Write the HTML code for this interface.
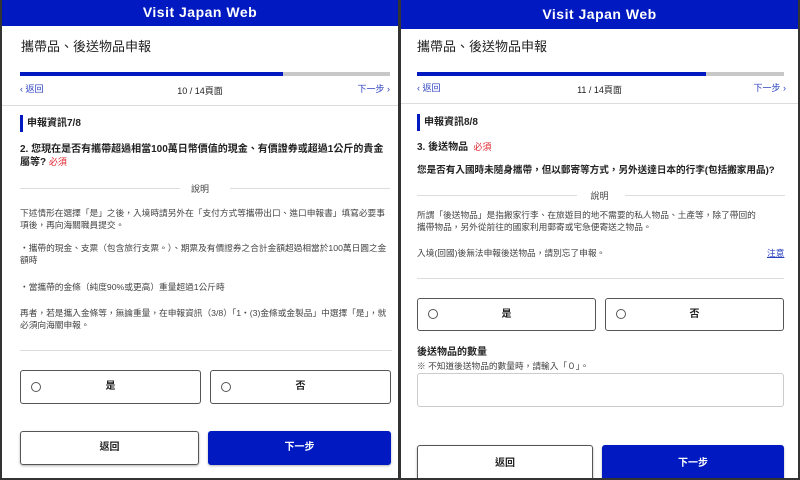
<!DOCTYPE html>
<html><head><meta charset="utf-8"><style>
*{margin:0;padding:0;box-sizing:border-box}
body{width:800px;height:480px;background:#333;font-family:"Liberation Sans","Noto Sans CJK TC",sans-serif;color:#222;position:relative;overflow:hidden}
.p{position:absolute;top:0;background:#fff;overflow:hidden}
.a{position:absolute}
.hd{position:absolute;left:0;right:0;top:0;background:#0019c0;color:#fff;font-weight:bold;text-align:center;font-size:14px;letter-spacing:.5px}
.t{font-size:13px;color:#222}
.bar{height:4px;background:#c8c8c8}
.bar i{display:block;height:4px;background:#0019c0}
.nav{font-size:9px;color:#2a3fbf}
.sep{height:1px;background:#ddd}
.mk{border-left:3px solid #0019c0;padding-left:4px;font-size:10px;font-weight:bold}
.q{font-size:10px;font-weight:bold;line-height:13px}
.r{color:#e0202a}
.s{font-size:8.7px;color:#444;line-height:12px}
.box{border:1px solid #555;border-radius:3px;font-size:10px;font-weight:bold;text-align:center}
.box b{position:absolute;left:10px;width:10px;height:10px;border:1px solid #555;border-radius:50%}
.btn{border:1px solid #555;border-radius:3px;font-size:10px;font-weight:bold;text-align:center;box-shadow:0 1px 2px rgba(0,0,0,.3)}
.blue{background:#0019c0;color:#fff;border-color:#0019c0}
</style></head><body>
<div class="p" style="left:2px;width:396px;height:478px">
 <div class="hd" style="height:26px;line-height:24px">Visit Japan Web</div>
 <div class="a t" style="left:19px;top:36px">攜帶品、後送物品申報</div>
 <div class="a bar" style="left:18px;top:72px;width:370px"><i style="width:263px"></i></div>
 <div class="a nav" style="left:18px;top:82px">&lsaquo; 返回</div>
 <div class="a" style="left:0;width:396px;top:84px;text-align:center;font-size:9px">10 / 14頁面</div>
 <div class="a nav" style="right:8px;top:82px">下一步 &rsaquo;</div>
 <div class="a sep" style="left:0;width:396px;top:105px"></div>
 <div class="a mk" style="left:18px;top:115px;height:17px;line-height:17px">申報資訊7/8</div>
 <div class="a q" style="left:18px;top:143px;width:372px">2. 您現在是否有攜帶超過相當100萬日幣價值的現金、有價證券或超過1公斤的貴金屬等? <span class="r" style="font-weight:normal;font-size:9px">必須</span></div>
 <div class="a sep" style="left:18px;top:188px;width:160px"></div>
 <div class="a sep" style="left:228px;top:188px;width:160px"></div>
 <div class="a" style="left:0;width:396px;text-align:center;top:182px;font-size:9px;color:#444">說明</div>
 <div class="a s" style="left:18px;top:207px;width:372px">下述情形在選擇「是」之後，入境時請另外在「支付方式等攜帶出口、進口申報書」填寫必要事項後，再向海關職員提交。</div>
 <div class="a s" style="left:18px;top:242px;width:372px">・攜帶的現金、支票（包含旅行支票。）、期票及有價證券之合計金額超過相當於100萬日圓之金額時</div>
 <div class="a s" style="left:18px;top:281px;width:372px">・當攜帶的金條（純度90%或更高）重量超過1公斤時</div>
 <div class="a s" style="left:18px;top:307px;width:372px">再者，若是攜入金條等，無論重量，在申報資訊（3/8）「1・(3)金條或金製品」中選擇「是」，就必須向海關申報。</div>
 <div class="a sep" style="left:18px;top:350px;width:372px"></div>
 <div class="a box" style="left:18px;top:370px;width:181px;height:34px;line-height:32px"><b style="top:11px"></b>是</div>
 <div class="a box" style="left:208px;top:370px;width:181px;height:34px;line-height:32px"><b style="top:11px"></b>否</div>
 <div class="a btn" style="left:18px;top:431px;width:179px;height:34px;line-height:32px">返回</div>
 <div class="a btn blue" style="left:206px;top:431px;width:183px;height:34px;line-height:32px">下一步</div>
</div>
<div class="p" style="left:401px;width:397px;height:478px">
 <div class="hd" style="height:29px;line-height:28px">Visit Japan Web</div>
 <div class="a t" style="left:16px;top:36px">攜帶品、後送物品申報</div>
 <div class="a bar" style="left:16px;top:72px;width:367px"><i style="width:289px"></i></div>
 <div class="a nav" style="left:16px;top:81px">&lsaquo; 返回</div>
 <div class="a" style="left:0;width:397px;top:83px;text-align:center;font-size:9px">11 / 14頁面</div>
 <div class="a nav" style="right:12px;top:81px">下一步 &rsaquo;</div>
 <div class="a sep" style="left:0;width:397px;top:103px"></div>
 <div class="a mk" style="left:16px;top:114px;height:17px;line-height:17px">申報資訊8/8</div>
 <div class="a q" style="left:16px;top:141px">3. 後送物品 <span class="r" style="font-weight:normal;font-size:9px">&nbsp;必須</span></div>
 <div class="a q" style="left:16px;top:164px;width:380px;font-size:9.6px">您是否有入國時未隨身攜帶，但以郵寄等方式，另外送達日本的行李(包括搬家用品)?</div>
 <div class="a sep" style="left:16px;top:195px;width:160px"></div>
 <div class="a sep" style="left:224px;top:195px;width:160px"></div>
 <div class="a" style="left:0;width:397px;text-align:center;top:189px;font-size:9px;color:#444">說明</div>
 <div class="a s" style="left:16px;top:209px;width:340px">所謂「後送物品」是指搬家行李、在旅遊目的地不需要的私人物品、土產等，除了帶回的攜帶物品，另外從前往的國家利用郵寄或宅急便寄送之物品。</div>
 <div class="a s" style="left:16px;top:247px">入境(回國)後無法申報後送物品，請別忘了申報。</div>
 <div class="a s" style="left:366px;top:247px;color:#2a3fbf;text-decoration:underline">注意</div>
 <div class="a sep" style="left:16px;top:278px;width:367px"></div>
 <div class="a box" style="left:16px;top:298px;width:179px;height:33px;line-height:31px"><b style="top:10px"></b>是</div>
 <div class="a box" style="left:204px;top:298px;width:179px;height:33px;line-height:31px"><b style="top:10px"></b>否</div>
 <div class="a q" style="left:16px;top:346px">後送物品的數量</div>
 <div class="a s" style="left:16px;top:360px">※ 不知道後送物品的數量時，請輸入「０」。</div>
 <div class="a" style="left:16px;top:373px;width:367px;height:34px;border:1px solid #ccc;border-radius:3px"></div>
 <div class="a btn" style="left:16px;top:445px;width:176px;height:40px;line-height:36px">返回</div>
 <div class="a btn blue" style="left:201px;top:445px;width:182px;height:40px;line-height:36px">下一步</div>
</div>
</body></html>
